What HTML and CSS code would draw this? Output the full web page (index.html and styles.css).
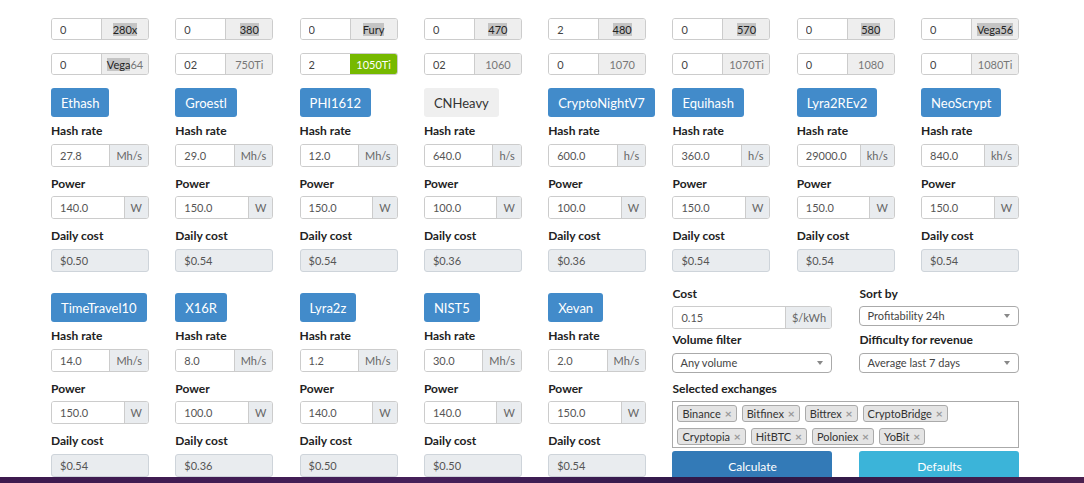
FILE: index.html
```html
<!DOCTYPE html>
<html lang="en">
<head>
    <meta charset="UTF-8">
    <title>Mining Calculator</title>
    <link rel="stylesheet" href="styles.css">
</head>
<body>
    <div class="page">
        <div class="gpu-grid">
            <div class="gpu"><input class="gpu-count" value="0"><span class="gpu-name"><mark>280x</mark></span></div>
            <div class="gpu"><input class="gpu-count" value="0"><span class="gpu-name"><mark>380</mark></span></div>
            <div class="gpu"><input class="gpu-count" value="0"><span class="gpu-name"><mark>Fury</mark></span></div>
            <div class="gpu"><input class="gpu-count" value="0"><span class="gpu-name"><mark>470</mark></span></div>
            <div class="gpu"><input class="gpu-count" value="2"><span class="gpu-name"><mark>480</mark></span></div>
            <div class="gpu"><input class="gpu-count" value="0"><span class="gpu-name"><mark>570</mark></span></div>
            <div class="gpu"><input class="gpu-count" value="0"><span class="gpu-name"><mark>580</mark></span></div>
            <div class="gpu"><input class="gpu-count" value="0"><span class="gpu-name"><mark>Vega56</mark></span></div>

            <div class="gpu"><input class="gpu-count" value="0"><span class="gpu-name"><mark>Vega</mark>64</span></div>
            <div class="gpu"><input class="gpu-count" value="02"><span class="gpu-name">750Ti</span></div>
            <div class="gpu"><input class="gpu-count" value="2"><span class="gpu-name active">1050Ti</span></div>
            <div class="gpu"><input class="gpu-count" value="02"><span class="gpu-name">1060</span></div>
            <div class="gpu"><input class="gpu-count" value="0"><span class="gpu-name">1070</span></div>
            <div class="gpu"><input class="gpu-count" value="0"><span class="gpu-name">1070Ti</span></div>
            <div class="gpu"><input class="gpu-count" value="0"><span class="gpu-name">1080</span></div>
            <div class="gpu"><input class="gpu-count" value="0"><span class="gpu-name">1080Ti</span></div>
        </div>

        <div class="algo-grid">
            <div class="algo">
                <button class="algo-btn">Ethash</button>
                <label class="field-label">Hash rate</label>
                <div class="input-group"><input value="27.8"><span class="addon">Mh/s</span></div>
                <label class="field-label">Power</label>
                <div class="input-group"><input value="140.0"><span class="addon">W</span></div>
                <label class="field-label">Daily cost</label>
                <div class="readonly">$0.50</div>
            </div>
            <div class="algo">
                <button class="algo-btn">Groestl</button>
                <label class="field-label">Hash rate</label>
                <div class="input-group"><input value="29.0"><span class="addon">Mh/s</span></div>
                <label class="field-label">Power</label>
                <div class="input-group"><input value="150.0"><span class="addon">W</span></div>
                <label class="field-label">Daily cost</label>
                <div class="readonly">$0.54</div>
            </div>
            <div class="algo">
                <button class="algo-btn">PHI1612</button>
                <label class="field-label">Hash rate</label>
                <div class="input-group"><input value="12.0"><span class="addon">Mh/s</span></div>
                <label class="field-label">Power</label>
                <div class="input-group"><input value="150.0"><span class="addon">W</span></div>
                <label class="field-label">Daily cost</label>
                <div class="readonly">$0.54</div>
            </div>
            <div class="algo">
                <button class="algo-btn off">CNHeavy</button>
                <label class="field-label">Hash rate</label>
                <div class="input-group"><input value="640.0"><span class="addon">h/s</span></div>
                <label class="field-label">Power</label>
                <div class="input-group"><input value="100.0"><span class="addon">W</span></div>
                <label class="field-label">Daily cost</label>
                <div class="readonly">$0.36</div>
            </div>
            <div class="algo">
                <button class="algo-btn">CryptoNightV7</button>
                <label class="field-label">Hash rate</label>
                <div class="input-group"><input value="600.0"><span class="addon">h/s</span></div>
                <label class="field-label">Power</label>
                <div class="input-group"><input value="100.0"><span class="addon">W</span></div>
                <label class="field-label">Daily cost</label>
                <div class="readonly">$0.36</div>
            </div>
            <div class="algo">
                <button class="algo-btn">Equihash</button>
                <label class="field-label">Hash rate</label>
                <div class="input-group"><input value="360.0"><span class="addon">h/s</span></div>
                <label class="field-label">Power</label>
                <div class="input-group"><input value="150.0"><span class="addon">W</span></div>
                <label class="field-label">Daily cost</label>
                <div class="readonly">$0.54</div>
            </div>
            <div class="algo">
                <button class="algo-btn">Lyra2REv2</button>
                <label class="field-label">Hash rate</label>
                <div class="input-group"><input value="29000.0"><span class="addon">kh/s</span></div>
                <label class="field-label">Power</label>
                <div class="input-group"><input value="150.0"><span class="addon">W</span></div>
                <label class="field-label">Daily cost</label>
                <div class="readonly">$0.54</div>
            </div>
            <div class="algo">
                <button class="algo-btn">NeoScrypt</button>
                <label class="field-label">Hash rate</label>
                <div class="input-group"><input value="840.0"><span class="addon">kh/s</span></div>
                <label class="field-label">Power</label>
                <div class="input-group"><input value="150.0"><span class="addon">W</span></div>
                <label class="field-label">Daily cost</label>
                <div class="readonly">$0.54</div>
            </div>

            <div class="algo">
                <button class="algo-btn">TimeTravel10</button>
                <label class="field-label">Hash rate</label>
                <div class="input-group"><input value="14.0"><span class="addon">Mh/s</span></div>
                <label class="field-label">Power</label>
                <div class="input-group"><input value="150.0"><span class="addon">W</span></div>
                <label class="field-label">Daily cost</label>
                <div class="readonly">$0.54</div>
            </div>
            <div class="algo">
                <button class="algo-btn">X16R</button>
                <label class="field-label">Hash rate</label>
                <div class="input-group"><input value="8.0"><span class="addon">Mh/s</span></div>
                <label class="field-label">Power</label>
                <div class="input-group"><input value="100.0"><span class="addon">W</span></div>
                <label class="field-label">Daily cost</label>
                <div class="readonly">$0.36</div>
            </div>
            <div class="algo">
                <button class="algo-btn">Lyra2z</button>
                <label class="field-label">Hash rate</label>
                <div class="input-group"><input value="1.2"><span class="addon">Mh/s</span></div>
                <label class="field-label">Power</label>
                <div class="input-group"><input value="140.0"><span class="addon">W</span></div>
                <label class="field-label">Daily cost</label>
                <div class="readonly">$0.50</div>
            </div>
            <div class="algo">
                <button class="algo-btn">NIST5</button>
                <label class="field-label">Hash rate</label>
                <div class="input-group"><input value="30.0"><span class="addon">Mh/s</span></div>
                <label class="field-label">Power</label>
                <div class="input-group"><input value="140.0"><span class="addon">W</span></div>
                <label class="field-label">Daily cost</label>
                <div class="readonly">$0.50</div>
            </div>
            <div class="algo">
                <button class="algo-btn">Xevan</button>
                <label class="field-label">Hash rate</label>
                <div class="input-group"><input value="2.0"><span class="addon">Mh/s</span></div>
                <label class="field-label">Power</label>
                <div class="input-group"><input value="150.0"><span class="addon">W</span></div>
                <label class="field-label">Daily cost</label>
                <div class="readonly">$0.54</div>
            </div>

            <div class="settings">
                <div class="setting">
                    <label class="field-label">Cost</label>
                    <div class="input-group tall"><input value="0.15"><span class="addon wide">$/kWh</span></div>
                </div>
                <div class="setting">
                    <label class="field-label">Sort by</label>
                    <div class="select">Profitability 24h</div>
                </div>
                <div class="setting">
                    <label class="field-label">Volume filter</label>
                    <div class="select">Any volume</div>
                </div>
                <div class="setting">
                    <label class="field-label">Difficulty for revenue</label>
                    <div class="select">Average last 7 days</div>
                </div>
                <div class="setting full">
                    <label class="field-label">Selected exchanges</label>
                    <div class="tag-box">
                        <span class="tag">Binance <b>×</b></span>
                        <span class="tag">Bitfinex <b>×</b></span>
                        <span class="tag">Bittrex <b>×</b></span>
                        <span class="tag">CryptoBridge <b>×</b></span>
                        <span class="tag">Cryptopia <b>×</b></span>
                        <span class="tag">HitBTC <b>×</b></span>
                        <span class="tag">Poloniex <b>×</b></span>
                        <span class="tag">YoBit <b>×</b></span>
                    </div>
                </div>
                <button class="action calc">Calculate</button>
                <button class="action defaults">Defaults</button>
            </div>
        </div>
    </div>
</body>
</html>
```

FILE: styles.css
```css
body {
    margin: 0;
    font-family: 'Segoe UI', Lato, sans-serif;
    background: linear-gradient(90deg, #3d1a4e, #46205a 40%, #2e1846 70%, #4a2150);
    color: #222;
}

.page {
    background-color: #fff;
    height: 477px;
    overflow: hidden;
    padding: 18px 0 0 51px;
    box-sizing: border-box;
}

/* gpu counters */
.gpu-grid {
    display: grid;
    grid-template-columns: repeat(8, 98px);
    column-gap: 26.3px;
    row-gap: 13px;
}

.gpu {
    display: flex;
    height: 22px;
    border: 1px solid #ccc;
    border-radius: 3px;
    box-sizing: border-box;
    overflow: hidden;
}

.gpu-count {
    flex: 1;
    min-width: 0;
    border: none;
    padding: 0 0 0 8px;
    font: 11px 'Segoe UI', Lato, sans-serif;
    color: #444;
    outline: none;
}

.gpu-name {
    width: 46px;
    flex: none;
    background-color: #eee;
    border-left: 1px solid #ccc;
    display: flex;
    align-items: center;
    justify-content: center;
    font-size: 11px;
    color: #777;
}

.gpu-name mark {
    background-color: #c4c4c4;
    color: #222;
}

.gpu-name.active {
    background-color: #76b900;
    border-left-color: #76b900;
    color: #fff;
}

/* algorithm blocks */
.algo-grid {
    display: grid;
    grid-template-columns: repeat(8, 98px);
    column-gap: 26.3px;
    row-gap: 21.5px;
    margin-top: 13px;
    align-items: start;
}

.algo {
    display: flex;
    flex-direction: column;
    align-items: flex-start;
}

.algo-btn {
    height: 29px;
    padding: 0 10px;
    border: none;
    border-radius: 3px;
    background-color: #428bca;
    color: #fff;
    font: 13px 'Segoe UI', Lato, sans-serif;
}

.algo-btn.off {
    background-color: #efefef;
    color: #333;
}

.field-label {
    display: block;
    font-size: 12px;
    font-weight: bold;
    line-height: 17px;
    margin: 8px 0 4.5px;
}

.algo-btn + .field-label {
    margin-top: 5px;
}

.input-group {
    display: flex;
    width: 98px;
    height: 23px;
    border: 1px solid #ccc;
    border-radius: 3px;
    box-sizing: border-box;
    overflow: hidden;
}

.input-group input {
    flex: 1;
    min-width: 0;
    border: none;
    padding: 0 0 0 8px;
    font: 11px 'Segoe UI', Lato, sans-serif;
    color: #555;
    outline: none;
}

.addon {
    flex: none;
    padding: 0 6px;
    background-color: #e9ecef;
    border-left: 1px solid #ccc;
    display: flex;
    align-items: center;
    font-size: 11px;
    color: #666;
}

.addon.wide {
    width: 45px;
    justify-content: center;
    padding: 0;
}

.readonly {
    width: 98px;
    height: 23px;
    line-height: 21px;
    padding-left: 8px;
    box-sizing: border-box;
    background-color: #e9ecef;
    border: 1px solid #ced4da;
    border-radius: 3px;
    font-size: 11px;
    color: #555;
}

/* settings panel */
.settings {
    grid-column: span 3;
    margin-top: -8px;
    display: grid;
    grid-template-columns: 160px 160px;
    column-gap: 27px;
    row-gap: 2px;
}

.settings .field-label {
    margin: 0 0 4px;
}

.setting:nth-child(3),
.setting:nth-child(4) {
    margin-bottom: 5px;
}

.setting:nth-child(3) .field-label,
.setting:nth-child(4) .field-label {
    margin-bottom: 5px;
}

.setting:nth-child(2) .select {
    margin-top: 1px;
}

.setting.full {
    grid-column: span 2;
}

.input-group.tall {
    width: 160px;
}

.select {
    height: 20px;
    line-height: 18px;
    border: 1px solid #aaa;
    border-radius: 4px;
    box-sizing: border-box;
    padding-left: 7px;
    font-size: 11px;
    color: #444;
    background-color: #fff;
    display: flex;
    justify-content: space-between;
    align-items: center;
}

.select::after {
    content: "";
    margin-right: 8px;
    border-left: 3.5px solid transparent;
    border-right: 3.5px solid transparent;
    border-top: 4px solid #888;
}

.tag-box {
    height: 47px;
    border: 1px solid #aaa;
    box-sizing: border-box;
    padding: 3px 4px;
    display: flex;
    flex-wrap: wrap;
    align-content: flex-start;
    gap: 6px 5px;
    margin-top: -0.5px;
}

.tag {
    height: 17px;
    line-height: 15px;
    padding: 0 4px;
    border: 1px solid #aaa;
    border-radius: 3px;
    box-sizing: border-box;
    background-color: #e4e4e4;
    font-size: 11px;
    color: #333;
}

.tag b {
    color: #999;
    font-size: 12px;
    margin-left: 1px;
}

.action {
    height: 32px;
    margin-top: 1px;
    border: none;
    border-radius: 3px;
    color: #fff;
    font: 12px 'Segoe UI', Lato, sans-serif;
}

.calc {
    background-color: #337ab7;
}

.defaults {
    background-color: #3bb4d9;
}
```
